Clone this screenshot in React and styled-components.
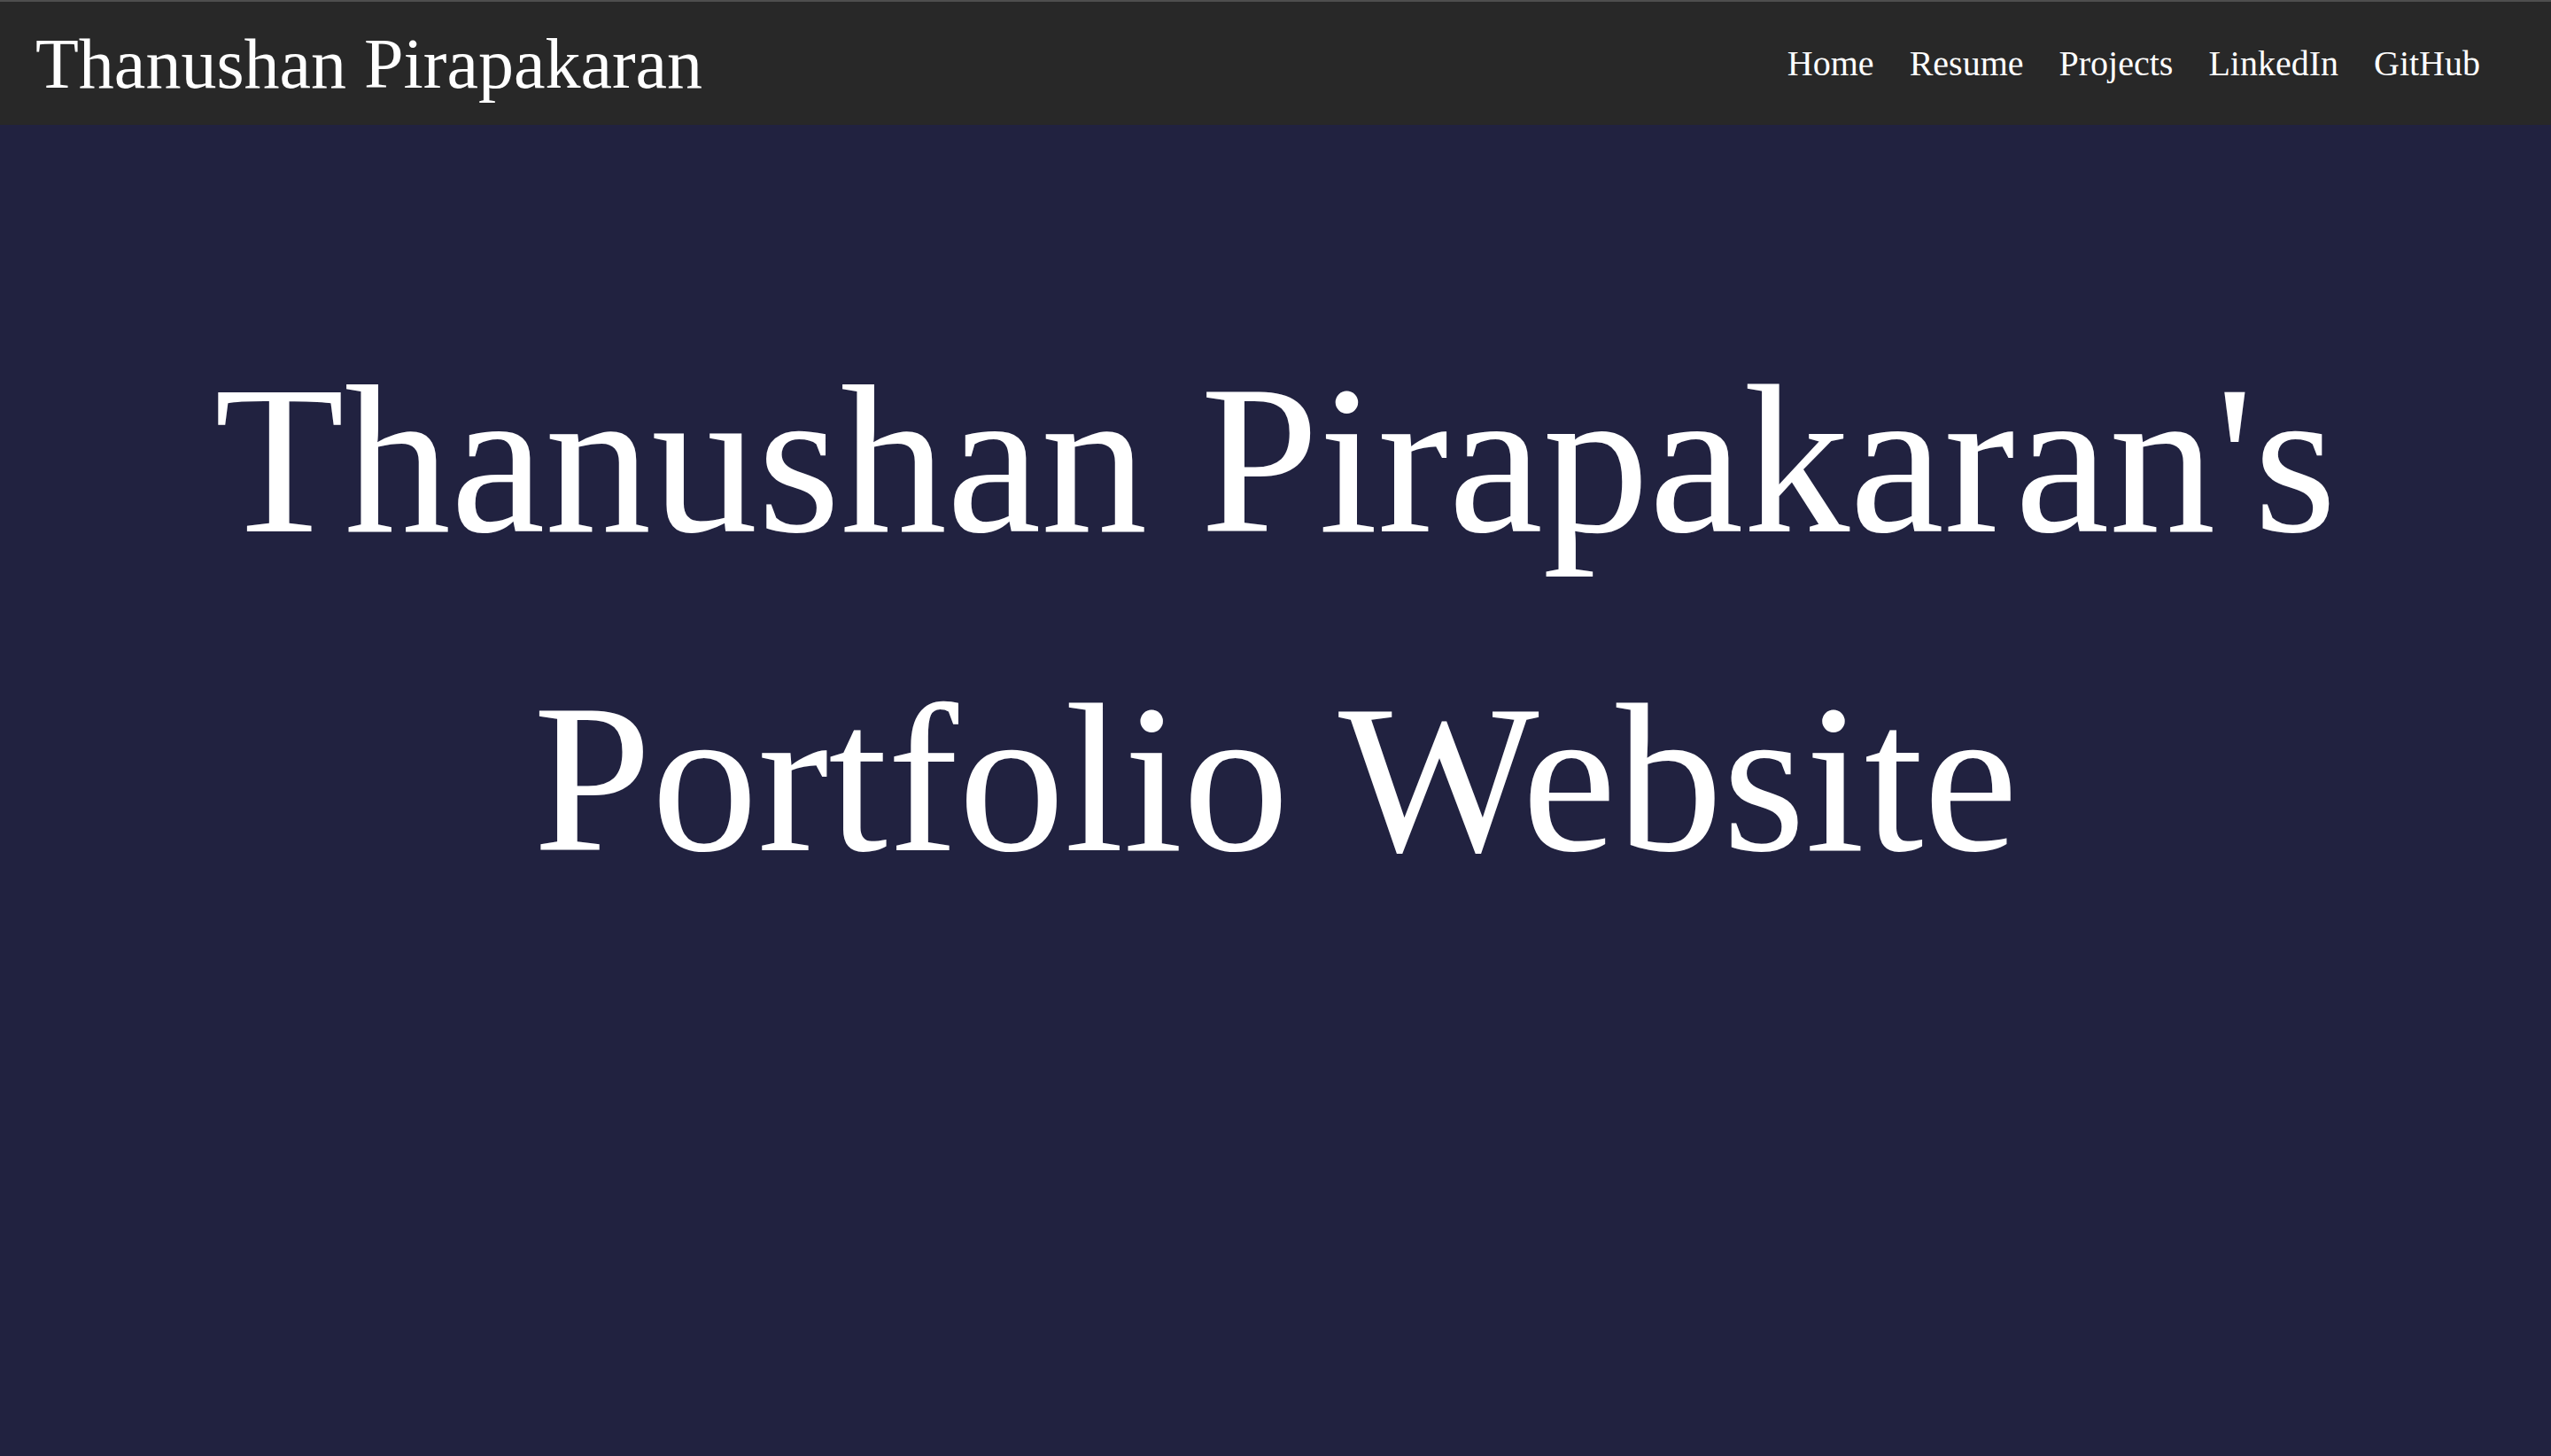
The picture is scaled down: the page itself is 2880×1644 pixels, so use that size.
import React from "react";
import styled, { createGlobalStyle } from "styled-components";

const GlobalStyle = createGlobalStyle`
    html, body {
        margin:0;
        padding:0;
        background:#212240;
        font-family:"Liberation Serif", "Times New Roman", serif;
    }
`;

const Page = styled.div`
    min-height:1644px;
    background:#212240;
    color:#fff;
    display:flex;
    flex-direction:column;
`;

const NavBar = styled.header`
    height:139px;
    border-top:2px solid #4e4e4e;
    background:#282828;
    display:flex;
    align-items:center;
    justify-content:space-between;
    padding:0 80px 0 40px;
`;

const Brand = styled.a`
    font-size:80px;
    color:#fff;
    text-decoration:none;
    line-height:1;
`;

const NavLinks = styled.nav`
    display:flex;
    gap:40px;
`;

const NavLink = styled.a`
    font-size:40px;
    color:#fff;
    text-decoration:none;
    line-height:1;
`;

const Hero = styled.h1`
    margin:198px 0 0 0;
    padding:0 40px;
    font-size:240px;
    font-weight:400;
    line-height:1.5;
    text-align:center;
    color:#fff;
`;

const links = ["Home", "Resume", "Projects", "LinkedIn", "GitHub"];

export default function App(){
    return <Page>
            <GlobalStyle/>
            <NavBar>
                <Brand href="#">Thanushan Pirapakaran</Brand>
                <NavLinks>
                    {links.map(l => <NavLink key={l} href="#">{l}</NavLink>)}
                </NavLinks>
            </NavBar>
            <Hero>Thanushan Pirapakaran's Portfolio Website</Hero>
           </Page>
}
